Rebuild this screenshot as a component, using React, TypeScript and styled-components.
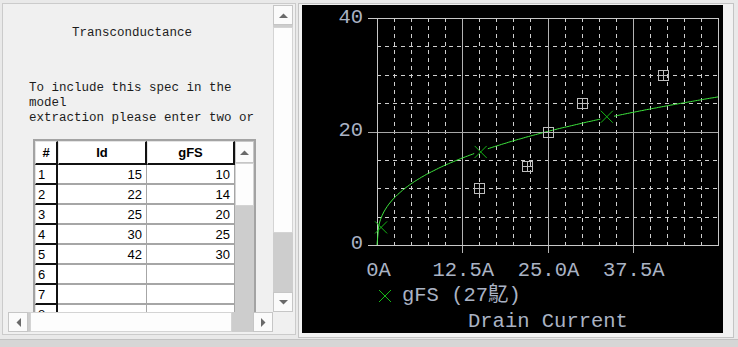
import React from "react";
import styled, { createGlobalStyle } from "styled-components";

// page reset
const GlobalStyle = createGlobalStyle`
  html, body {
    margin: 0;
    padding: 0;
  }
  body {
    background: #d6d6d6;
  }
`;

const Page = styled.div`
  width: 738px;
  height: 347px;
  background: #d6d6d6;
  overflow: hidden;
`;

const Main = styled.div`
  display: flex;
  height: 340px;
  background: #e9e9e9;
  border-bottom: 1px solid #c2c2c2;
  box-sizing: border-box;
`;

// ---------- left side: spec pane ----------
const LeftPane = styled.div`
  flex: none;
  width: 296px;
  padding: 3px 0 0 2px;
  box-sizing: border-box;
`;

const LeftFrame = styled.div`
  width: 294px;
  height: 332px;
  box-sizing: border-box;
  border: 1px solid #cbcbcb;
  background: #f0f0f0;
  padding: 1px 2px 2px 5px;
  display: grid;
  grid-template-columns: 1fr 20px;
  grid-template-rows: 1fr 20px;
`;

const Content = styled.div`
  overflow: hidden;
  font-family: "Liberation Mono", monospace;
  font-size: 12.5px;
  line-height: 15px;
  color: #1c1c1c;
`;

const Title = styled.div`
  margin-top: 21px;
  padding-left: 64px;
  white-space: pre;
`;

const Note = styled.div`
  margin-top: 40px;
  padding-left: 21px;
  white-space: pre;
`;

const Corner = styled.div`
  background: #f0f0f0;
`;

// ---------- scrollbars ----------
const ScrollBar = styled.div<{ $vertical?: boolean }>`
  display: flex;
  flex-direction: ${(p) => (p.$vertical ? "column" : "row")};
  background: #cdcdcd;
  overflow: hidden;
`;

const TableScroll = styled(ScrollBar)`
  grid-column: 4;
  grid-row: 1 / span 10;
`;

const ScrollButton = styled.div<{ $size?: number }>`
  flex: none;
  width: ${(p) => (p.$size ? p.$size + "px" : "100%")};
  height: 100%;
  box-sizing: border-box;
  border: 1px solid #c6c6c6;
  background: #fbfbfb;
  display: flex;
  align-items: center;
  justify-content: center;
`;

const VButton = styled(ScrollButton)`
  width: 100%;
  height: ${(p) => (p.$size || 20) + "px"};
`;

const Thumb = styled.div<{ $vertical?: boolean; $size: number; $offset: number }>`
  flex: none;
  box-sizing: border-box;
  background: #fdfdfd;
  border: 1px solid #d4d4d4;
  ${(p) =>
    p.$vertical
      ? `height: ${p.$size}px; margin-top: ${p.$offset}px; width: 100%;`
      : `width: ${p.$size}px; margin-left: ${p.$offset}px; height: 100%;`}
`;

const Track = styled.div`
  flex: 1;
`;

const Arrow: React.FC<{ dir: "up" | "down" | "left" | "right" }> = ({ dir }) => {
  const vertical = dir === "up" || dir === "down";
  const pts = {
    up: "0,5 4.5,0.5 9,5",
    down: "0,0 4.5,4.5 9,0",
    left: "5,0 0.5,4.5 5,9",
    right: "0,0 4.5,4.5 0,9",
  }[dir];
  return (
    <svg width={vertical ? 9 : 5} height={vertical ? 5 : 9} viewBox={vertical ? "0 0 9 5" : "0 0 5 9"}>
      <polygon points={pts} fill="#6a6a6a" />
    </svg>
  );
};

// ---------- data table ----------
const TableBox = styled.div`
  margin: 13px 0 0 25px;
  width: 223px;
  box-sizing: border-box;
  border: 2px solid #a3a3a3;
  background: #fff;
  display: grid;
  grid-template-columns: 23px 89px 88px 19px;
  grid-template-rows: 24px;
  grid-auto-rows: 20px;
  font-family: "Liberation Sans", Arial, sans-serif;
  font-size: 13px;
  color: #000;
`;

const HeadCell = styled.div`
  display: flex;
  align-items: center;
  justify-content: center;
  font-weight: bold;
  box-sizing: border-box;
  border-top: 1px solid #e4e4e4;
  border-left: 1px solid #e4e4e4;
  border-right: 2px solid #111;
  border-bottom: 2px solid #111;
  background: #fff;
`;

const RowHead = styled.div`
  display: flex;
  align-items: center;
  padding-left: 2px;
  box-sizing: border-box;
  border-left: 1px solid #e4e4e4;
  border-right: 2px solid #111;
  border-bottom: 2px solid #111;
  background: #fff;
  overflow: hidden;
`;

const Cell = styled.div`
  display: flex;
  align-items: center;
  justify-content: flex-end;
  padding-right: 4px;
  box-sizing: border-box;
  border-right: 1px solid #a6a6a6;
  border-bottom: 2px solid #a6a6a6;
  background: #fff;
`;

const rows: [string, string][] = [
  ["15", "10"],
  ["22", "14"],
  ["25", "20"],
  ["30", "25"],
  ["42", "30"],
  ["", ""],
  ["", ""],
  ["", ""],
  ["", ""],
];

// ---------- right side: chart ----------
const RightPane = styled.div`
  flex: 1;
  padding: 3px 4px 0 2px;
  box-sizing: border-box;
`;

const ChartFrame = styled.div`
  height: 335px;
  box-sizing: border-box;
  border: 1px solid #c4c4c4;
  background: #f2f2f2;
  padding: 1px 0 0 3px;
`;

const ChartSvg = styled.svg`
  display: block;
  background: #000;
`;

const W = 421;
const H = 328;
const PX0 = 75;
const PX1 = 416;
const PY0 = 13;
const PY1 = 240;
const sx = (a: number) => PX0 + (a * (PX1 - PX0)) / 50;
const sy = (g: number) => PY1 - (g * (PY1 - PY0)) / 40;
const TEXT = "#aab3c4";
const FONT = '"Liberation Mono", "Noto Sans CJK SC", monospace';

const measured: [number, number][] = [
  [15, 10],
  [22, 14],
  [25, 20],
  [30, 25],
  [42, 30],
];

const fits: [number, number][] = [
  [0.6, 3.1],
  [15.2, 16.4],
  [33.7, 22.6],
];

const model = (a: number) => 5.81 * Math.pow(a, 0.384);

function curvePaths() {
  const segs: string[] = [];
  let cur: string[] = [];
  for (let a = 0; a <= 50.001; a += 0.25) {
    const gap = fits.slice(1).some(([fa]) => Math.abs(a - fa) < 0.9);
    if (gap) {
      if (cur.length) segs.push(cur.join(" "));
      cur = [];
      continue;
    }
    cur.push(`${cur.length ? "L" : "M"}${sx(a).toFixed(1)},${sy(model(a)).toFixed(1)}`);
  }
  if (cur.length) segs.push(cur.join(" "));
  return segs;
}

const Cross: React.FC<{ x: number; y: number; r?: number }> = ({ x, y, r = 6 }) => (
  <path d={`M${x - r},${y - r}L${x + r},${y + r}M${x + r},${y - r}L${x - r},${y + r}`} stroke="#16b816" strokeWidth={1} fill="none" />
);

const BoxMark: React.FC<{ x: number; y: number }> = ({ x, y }) => {
  const cx = Math.round(x) + 0.5;
  const cy = Math.round(y) + 0.5;
  return (
    <g stroke="#bdbdbd" strokeWidth={1} fill="none" shapeRendering="crispEdges">
      <rect x={cx - 5} y={cy - 5} width={10} height={10} />
      <path d={`M${cx - 5},${cy}H${cx + 5}M${cx},${cy - 5}V${cy + 5}`} />
    </g>
  );
};

const Chart: React.FC = () => {
  const minorX: number[] = [];
  for (let k = 1; k < 20; k++) if (k % 5 !== 0) minorX.push(k * 2.5);
  const minorY = [5, 10, 15, 25, 30, 35];
  const c = (v: number) => Math.round(v) + 0.5;

  return (
    <ChartSvg width={W} height={H} viewBox={`0 0 ${W} ${H}`}>
      <g shapeRendering="crispEdges" strokeWidth={1} fill="none">
        {minorX.map((a) => (
          <line key={"mx" + a} x1={c(sx(a))} x2={c(sx(a))} y1={PY0} y2={PY1} stroke="#cfcfcf" strokeDasharray="4 4" />
        ))}
        {minorY.map((g) => (
          <line key={"my" + g} x1={PX0} x2={PX1} y1={c(sy(g))} y2={c(sy(g))} stroke="#cfcfcf" strokeDasharray="4 4" />
        ))}
        {[12.5, 25, 37.5].map((a) => (
          <line key={"vx" + a} x1={c(sx(a))} x2={c(sx(a))} y1={PY0} y2={PY1 + 8} stroke="#b4b4b4" />
        ))}
        <line x1={66} x2={PX1} y1={c(sy(20))} y2={c(sy(20))} stroke="#a8a8a8" />
        <line x1={66} x2={PX0} y1={c(PY0)} y2={c(PY0)} stroke="#c8c8c8" />
        <line x1={66} x2={PX0} y1={c(PY1)} y2={c(PY1)} stroke="#c8c8c8" />
        <rect x={c(PX0)} y={c(PY0)} width={PX1 - PX0} height={PY1 - PY0} stroke="#c8c8c8" />
      </g>

      {curvePaths().map((d, i) => (
        <path key={i} d={d} stroke="#3ee63e" strokeWidth={1} fill="none" />
      ))}

      {measured.map(([a, g]) => (
        <BoxMark key={a} x={sx(a)} y={sy(g)} />
      ))}
      {fits.map(([a, g]) => (
        <Cross key={a} x={sx(a)} y={sy(g)} />
      ))}

      <g fontFamily={FONT} fontSize={20.5} fill={TEXT} dominantBaseline="central">
        <text x={61} y={sy(40) - 1} textAnchor="end">40</text>
        <text x={61} y={sy(20) - 1} textAnchor="end">20</text>
        <text x={61} y={sy(0) - 2} textAnchor="end">0</text>
        <text x={76.5} y={265} textAnchor="middle">0A</text>
        <text x={sx(12.5) + 1} y={265} textAnchor="middle">12.5A</text>
        <text x={sx(25) + 1} y={265} textAnchor="middle">25.0A</text>
        <text x={sx(37.5) + 1} y={265} textAnchor="middle">37.5A</text>
        <text x={100} y={290}>gFS (27鳦)</text>
        <text x={166} y={316}>Drain Current</text>
      </g>
      <Cross x={83} y={291} />
    </ChartSvg>
  );
};

export default function App() {
  return (
    <Page>
      <GlobalStyle />
      <Main>
        <LeftPane>
          <LeftFrame>
            <Content>
              <Title>Transconductance</Title>
              <Note>{"To include this spec in the\nmodel\nextraction please enter two or"}</Note>
              <TableBox>
                <HeadCell>#</HeadCell>
                <HeadCell>Id</HeadCell>
                <HeadCell>gFS</HeadCell>
                <TableScroll $vertical>
                  <VButton $size={22}>
                    <Arrow dir="up" />
                  </VButton>
                  <Thumb $vertical $size={43} $offset={0} />
                  <Track />
                </TableScroll>
                {rows.map(([id, g], i) => (
                  <React.Fragment key={i}>
                    <RowHead>{i + 1}</RowHead>
                    <Cell>{id}</Cell>
                    <Cell>{g}</Cell>
                  </React.Fragment>
                ))}
              </TableBox>
            </Content>

            <ScrollBar $vertical>
              <VButton $size={20}>
                <Arrow dir="up" />
              </VButton>
              <Thumb $vertical $size={206} $offset={2} />
              <Track />
              <VButton $size={20}>
                <Arrow dir="down" />
              </VButton>
            </ScrollBar>

            <ScrollBar>
              <ScrollButton $size={20}>
                <Arrow dir="left" />
              </ScrollButton>
              <Thumb $size={202} $offset={2} />
              <Track />
              <ScrollButton $size={20}>
                <Arrow dir="right" />
              </ScrollButton>
            </ScrollBar>
            <Corner />
          </LeftFrame>
        </LeftPane>

        <RightPane>
          <ChartFrame>
            <Chart />
          </ChartFrame>
        </RightPane>
      </Main>
    </Page>
  );
}
